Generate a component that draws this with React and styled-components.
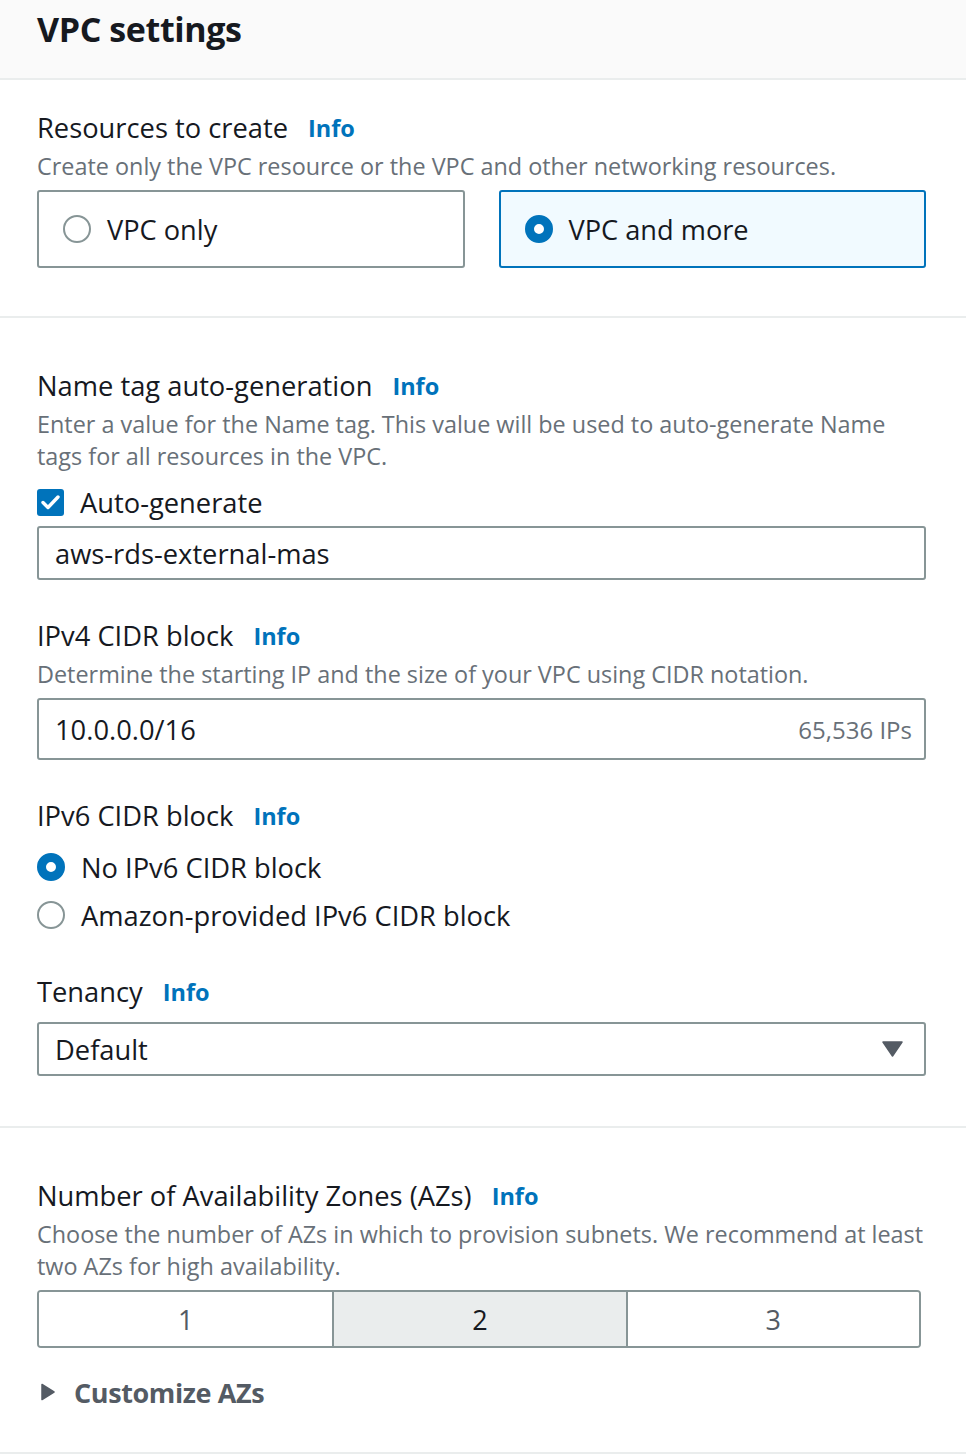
import React from "react";
import styled, { createGlobalStyle } from "styled-components";

const GlobalStyle = createGlobalStyle`
  body {
    margin: 0;
    background: #ffffff;
    font-family: "Open Sans", "Noto Sans", sans-serif;
    color: #16191f;
  }
`;

const Panel = styled.div`
  width: 966px;
`;

const Header = styled.div`
  height: 78px;
  background: #fafafa;
  border-bottom: 2px solid #eaeded;
  padding: 0 37px;
`;

const Title = styled.h2`
  margin: 0;
  padding-top: 9px;
  font-size: 34px;
  line-height: 40px;
  font-weight: 700;
  letter-spacing: -0.4px;
`;

const Section = styled.div`
  padding: ${(p) => p.$top}px 40px ${(p) => p.$bottom}px 37px;
  border-bottom: 2px solid #eaeded;
`;

const Label = styled.div`
  display: flex;
  align-items: center;
  gap: 20px;
  font-size: 27.3px;
  line-height: 36px;
  margin-top: ${(p) => p.$gap || 0}px;
`;

const Info = styled.span`
  color: #0073bb;
  font-weight: 700;
  font-size: 23.5px;
`;

const Desc = styled.div`
  color: #687078;
  font-size: 23.4px;
  line-height: 32px;
  margin-top: 4px;
`;

const Tiles = styled.div`
  display: grid;
  grid-template-columns: 1fr 1fr;
  gap: 34px;
  margin-top: 8px;
`;

const Tile = styled.div`
  height: 78px;
  box-sizing: border-box;
  border: 2px solid ${(p) => (p.$active ? "#0073bb" : "#879596")};
  background: ${(p) => (p.$active ? "#f1faff" : "#ffffff")};
  border-radius: 3px;
  display: flex;
  align-items: center;
  gap: 16px;
  padding-left: 24px;
  font-size: 27.2px;
`;

const Radio = styled.span`
  width: 28px;
  height: 28px;
  box-sizing: border-box;
  border-radius: 50%;
  border: ${(p) => (p.$checked ? "9px solid #0073bb" : "2px solid #879596")};
  background: #ffffff;
  flex: none;
`;

const CheckRow = styled.div`
  display: flex;
  align-items: center;
  gap: 16px;
  height: 36px;
  margin-top: 12px;
  font-size: 27.3px;
`;

const CheckBox = styled.span`
  width: 27px;
  height: 27px;
  border-radius: 3px;
  background: #0073bb;
  display: flex;
  align-items: center;
  justify-content: center;
  flex: none;
`;

const Field = styled.div`
  height: ${(p) => p.$h}px;
  box-sizing: border-box;
  border: 2px solid #879596;
  border-radius: 3px;
  margin-top: ${(p) => p.$gap}px;
  display: flex;
  align-items: center;
  justify-content: space-between;
  padding: 0 ${(p) => p.$right || 12}px 0 16px;
  font-size: 27.3px;
`;

const Hint = styled.span`
  color: #687078;
  font-size: 24px;
`;

const RadioRow = styled.div`
  display: flex;
  align-items: center;
  gap: 16px;
  height: 48px;
  font-size: 27.3px;
`;

const RadioGroup = styled.div`
  margin-top: 9px;
`;

const Segments = styled.div`
  display: grid;
  grid-template-columns: repeat(3, 1fr);
  width: 884px;
  height: 58px;
  box-sizing: border-box;
  border: 2px solid #879596;
  border-radius: 4px;
  overflow: hidden;
  margin-top: 8px;
`;

const Segment = styled.div`
  display: flex;
  align-items: center;
  justify-content: center;
  font-size: 27px;
  color: ${(p) => (p.$active ? "#16191f" : "#545b64")};
  background: ${(p) => (p.$active ? "#eaeded" : "#ffffff")};
  border-left: ${(p) => (p.$first ? "none" : "2px solid #879596")};
`;

const Expander = styled.div`
  display: flex;
  align-items: center;
  gap: 18px;
  margin-top: 26px;
  padding-left: 3px;
  height: 36px;
  color: #545b64;
  font-weight: 700;
  font-size: 27px;
  letter-spacing: -0.4px;
`;

export default function App() {
  return (
    <Panel>
      <GlobalStyle />
      <Header>
        <Title>VPC settings</Title>
      </Header>

      <Section $top={30} $bottom={48}>
        <Label>
          Resources to create <Info>Info</Info>
        </Label>
        <Desc>Create only the VPC resource or the VPC and other networking resources.</Desc>
        <Tiles>
          <Tile>
            <Radio />
            VPC only
          </Tile>
          <Tile $active>
            <Radio $checked />
            VPC and more
          </Tile>
        </Tiles>
      </Section>

      <Section $top={50} $bottom={50}>
        <Label>
          Name tag auto-generation <Info>Info</Info>
        </Label>
        <Desc>
          Enter a value for the Name tag. This value will be used to auto-generate Name tags for all
          resources in the VPC.
        </Desc>
        <CheckRow>
          <CheckBox>
            <svg width="19" height="15" viewBox="0 0 19 15">
              <path d="M2 7.5 L7 12.5 L17 2" fill="none" stroke="#fff" strokeWidth="3.4" strokeLinecap="round" strokeLinejoin="round" />
            </svg>
          </CheckBox>
          Auto-generate
        </CheckRow>
        <Field $h={54} $gap={6}>aws-rds-external-mas</Field>

        <Label $gap={38}>
          IPv4 CIDR block <Info>Info</Info>
        </Label>
        <Desc>Determine the starting IP and the size of your VPC using CIDR notation.</Desc>
        <Field $h={62} $gap={8}>
          10.0.0.0/16
          <Hint>65,536 IPs</Hint>
        </Field>

        <Label $gap={38}>
          IPv6 CIDR block <Info>Info</Info>
        </Label>
        <RadioGroup>
          <RadioRow>
            <Radio $checked />
            No IPv6 CIDR block
          </RadioRow>
          <RadioRow>
            <Radio />
            Amazon-provided IPv6 CIDR block
          </RadioRow>
        </RadioGroup>

        <Label $gap={35}>
          Tenancy <Info>Info</Info>
        </Label>
        <Field $h={54} $gap={12} $right={21}>
          Default
          <svg width="21" height="16" viewBox="0 0 21 16">
            <path d="M1 1 H20 L10.5 15 Z" fill="#545b64" stroke="#545b64" strokeWidth="1.5" strokeLinejoin="round" />
          </svg>
        </Field>
      </Section>

      <Section $top={50} $bottom={42}>
        <Label>
          Number of Availability Zones (AZs) <Info>Info</Info>
        </Label>
        <Desc>
          Choose the number of AZs in which to provision subnets. We recommend at least two AZs for
          high availability.
        </Desc>
        <Segments>
          <Segment $first>1</Segment>
          <Segment $active>2</Segment>
          <Segment>3</Segment>
        </Segments>
        <Expander>
          <svg width="16" height="18" viewBox="0 0 16 18">
            <path d="M2 1.5 L14 9 L2 16.5 Z" fill="#545b64" stroke="#545b64" strokeWidth="1.5" strokeLinejoin="round" />
          </svg>
          Customize AZs
        </Expander>
      </Section>
    </Panel>
  );
}
